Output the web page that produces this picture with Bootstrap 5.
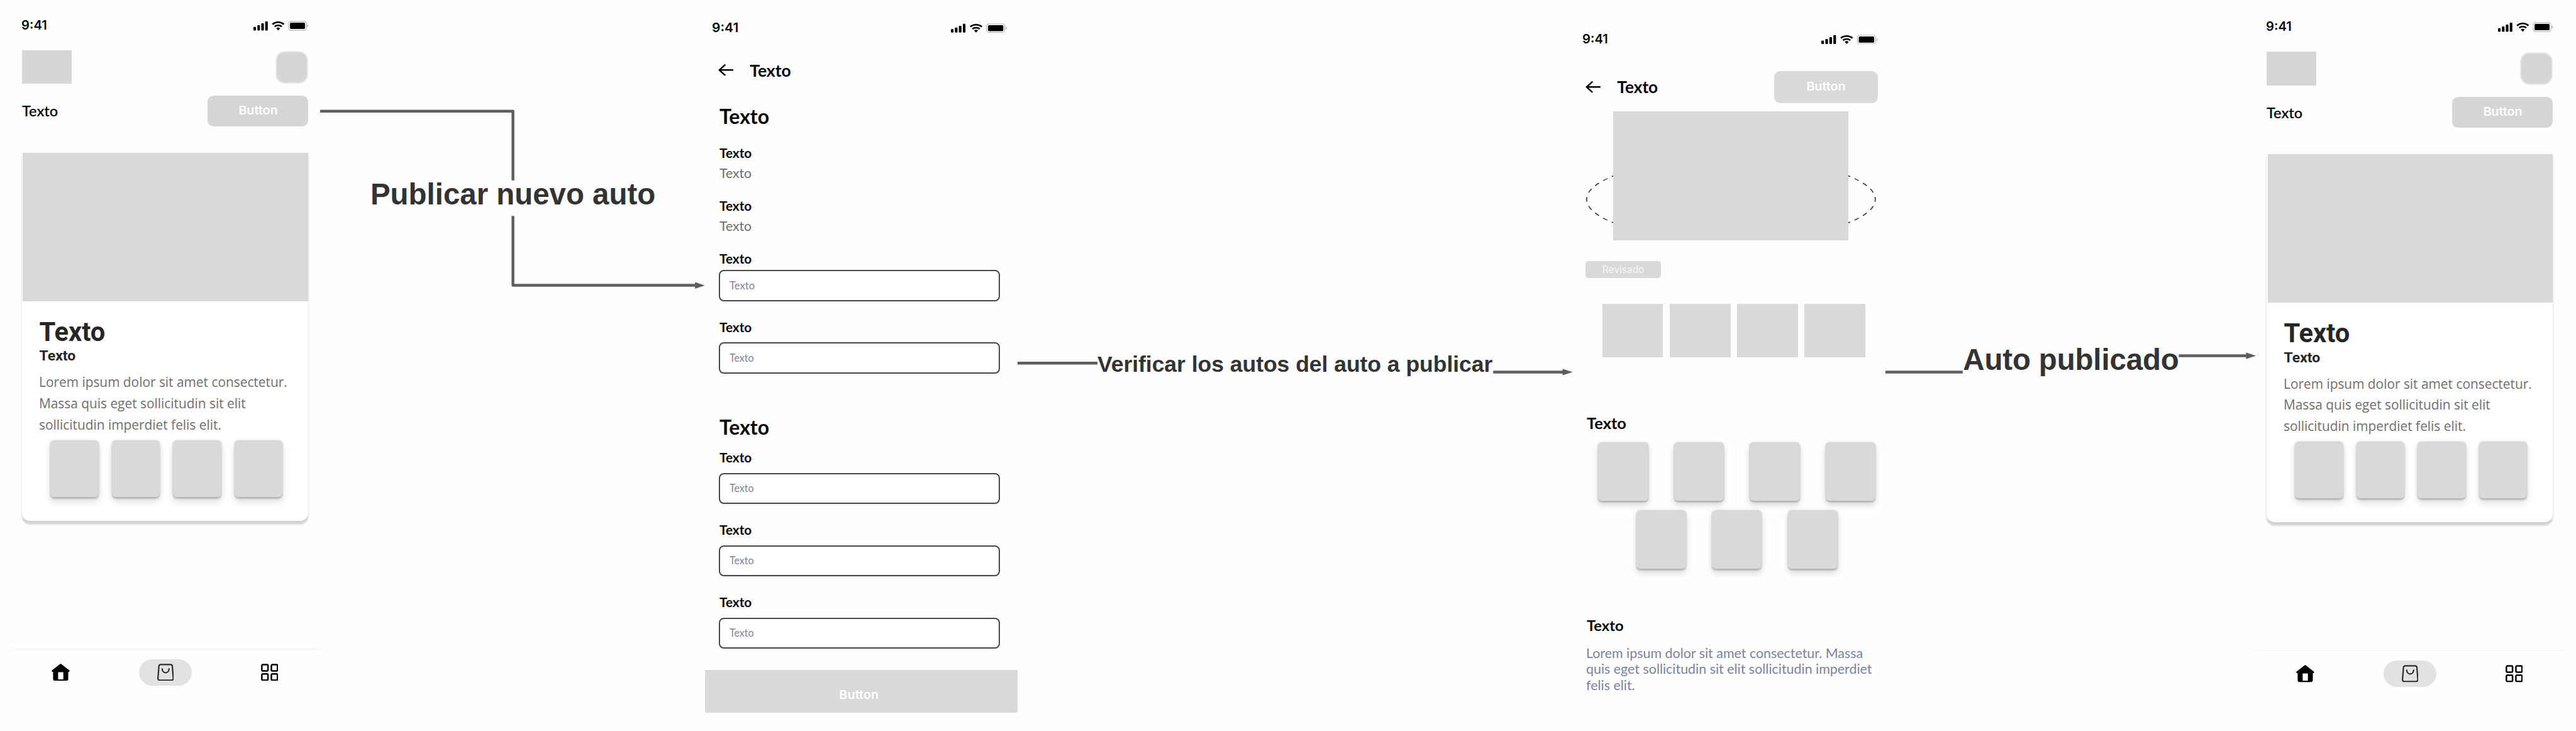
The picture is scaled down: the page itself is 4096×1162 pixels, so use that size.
<!DOCTYPE html>
<html lang="es">
<head>
<meta charset="utf-8">
<meta name="viewport" content="width=device-width, initial-scale=1">
<title>Flujo: publicar auto</title>
<link href="https://cdn.jsdelivr.net/npm/bootstrap@5.3.0/dist/css/bootstrap.min.css" rel="stylesheet">
<style>
/* 1rem = 10 board units */
html{font-size:8.9005px}
body{background:#fefefe;font-family:Lato,sans-serif;color:#050505;overflow:hidden}
.board{width:460.2rem;height:130.5rem;padding-left:2rem}
.phone{height:130.5rem}
.phone-home{width:55.2rem}
.phone-form{width:55.83rem}
.phone-detail{width:55.8rem}
.lower{padding-top:.25rem}
.lower .tabs{height:14.45rem}
svg{display:block}
.wire-a{width:68.8rem}
.wire-b{width:99.17rem}
.wire-c{width:66.2rem}
.wire-label{font-family:"Liberation Sans",Arial,sans-serif;font-weight:700;fill:#333}
.fill{background:#d9d9d9}
.fit{display:inline-block;white-space:nowrap;transform-origin:0 50%}
.fit-mid{transform-origin:50% 50%}
.fw-semi{font-weight:600}

.clock{font:600 2.23rem/2.4rem Inter,sans-serif;margin-left:-.08rem;transform:scaleX(1.02)}
.sys{width:9.85rem;height:1.8rem}
.btn-ghost{font:600 2.1rem/1 Inter,sans-serif;color:#fff;background:#d9d9d9;border:0;border-radius:1.1rem}
.btn-ghost .fit{transform:scaleX(1.055)}

/* home */
.home-pad{padding:0 2.1rem 0 1.95rem}
.home-status{padding-top:3.4rem}
.home-head{margin-top:3.2rem;height:6rem}
.brand-box{width:8.85rem;height:6rem;background:#d6d6d6}
.avatar-box{width:5.9rem;height:5.9rem;border:.3rem solid #e8e8ee;border-radius:1.7rem;background:#d6d6d6}
.home-title{margin-top:2.04rem;height:5.56rem;font-size:2.68rem;line-height:1}
.home-title .t{transform:scaleX(.983)}
.home-title .btn-ghost{width:18rem;height:5.56rem;background:#d6d6d6}
.listing{margin-top:4.67rem;height:65.75rem;border:0;border-radius:0 0 1.4rem 1.4rem;background:#fff;box-shadow:0 .6rem .3rem rgba(0,0,0,.14),0 .2rem .5rem rgba(0,0,0,.07)}
.listing-img{height:26.55rem;margin-left:.15rem}
.listing-body{padding:3.17rem 0 0 3.08rem;font-family:"Open Sans",sans-serif;color:#262626}
.listing-h{font-family:Roboto,sans-serif;font-size:4.68rem;font-weight:700;line-height:4.66rem}
.listing-s{font-family:Roboto,sans-serif;margin-top:.75rem;font-size:2.58rem;font-weight:700;line-height:1}
.listing-p{margin:1.36rem 0 0 -.1rem;font-size:2.43rem;line-height:3.8rem;color:#6f6f6f}
.listing-p .fit{transform:scaleX(.965)}
.tile{background:#d9d9d9;border-radius:.65rem;box-shadow:0 .25rem .2rem rgba(0,0,0,.15),0 .7rem 1.2rem rgba(0,0,0,.15),0 0 .4rem rgba(0,0,0,.14)}
.listing-tiles{margin-top:.9rem;padding-left:1.97rem;gap:2.36rem}
.listing-tiles .tile{width:8.6rem;height:10.1rem}
.tabs{height:14.7rem;border-top:.3rem solid #f7f7f7;padding:1.68rem 7.5rem 0 7.26rem}
.tab-pill{width:9.4rem;height:4.73rem;border-radius:2.4rem;background:#e2e2e2}
.ico-home{width:3.25rem;height:3.1rem}
.ico-bag{width:3rem;height:3.1rem}
.ico-grid{width:3.1rem;height:3.1rem}

/* form */
.form-status{padding:3.78rem 1.93rem 0 1.21rem}
.form-status .clock{transform:scaleX(1.058)}
.form-status .sys{width:10.01rem;height:1.72rem}
.topline{line-height:1;font-weight:700}
.form-top{margin-top:4.88rem;height:3rem;padding-left:2.32rem;font-size:2.98rem}
.back{width:2.73rem;height:2.1rem}
.form-top .back{margin-right:2.9rem}
.form-body{padding:0 3.23rem 0 2.44rem}
.form-h{font-size:3.65rem;font-weight:700;line-height:1;margin-top:4.9rem;padding-left:.1rem}
.form-h .fit{transform:scaleX(.985)}
.form-h.second{margin-top:7.82rem}
.lbl{font-size:2.43rem;line-height:1;font-weight:700;padding-left:.1rem}
.lbl .fit{transform:scaleX(.96)}
.val{font-size:2.43rem;line-height:1;color:#6e6e6e;padding-left:.1rem;margin-top:1.15rem}
.val .fit{transform:scaleX(.98)}
.field{height:5.55rem;margin-top:1.45rem;border:2px solid #484848;border-radius:.9rem;padding:0 0 0 1.64rem;font-size:1.85rem;line-height:1;color:#7d86a0;background:#fff;box-shadow:0 .2rem .3rem rgba(0,0,0,.06)}
.field .fit{transform:scaleX(.97)}
.field.first{margin-top:.72rem}
.field.first .fit{transform:scaleX(1.01)}
.gap-h{margin-top:3.55rem}
.gap-l{margin-top:3.5rem}
.gap-m{margin-top:3.42rem}
.gap-s{margin-top:2.38rem}
.submit{width:100%;height:7.64rem;margin-top:3.79rem;padding:1.45rem .9rem 0 0;font-size:2.12rem;border-radius:0 0 .3rem .3rem}

/* detail */
.det-status{padding:5.8rem 1.3rem 0 1.78rem}
.det-status .sys{width:10.1rem;height:1.75rem}
.det-top{margin-top:4.46rem;height:5.73rem;padding:0 1.3rem 0 2.27rem;font-size:2.95rem}
.det-top .back{margin-right:2.9rem}
.det-top .btn-ghost{width:18.55rem;height:5.73rem}
.stage{margin-top:1.51rem;height:23.03rem;padding-left:7.2rem}
.stage .fill{width:42.04rem;height:100%;position:relative}
.orbit{position:absolute;left:2.37rem;top:8.46rem;width:51.76rem;height:14.58rem}
.seal{margin:3.73rem 0 0 2.22rem;width:13.48rem;height:2.99rem;border-radius:.55rem;color:#f6f6f6;font:400 1.84rem/1 Inter,sans-serif}
.seal .fit{transform:scaleX(.947)}
.thumbs{margin-top:4.65rem;padding-left:5.24rem;gap:1.19rem}
.thumbs .fill{width:10.86rem;height:9.53rem}
.sec{padding-left:2.5rem;font-size:2.7rem;font-weight:700;line-height:1}
.sec .fit{transform:scaleX(1.062)}
.sec-a{margin-top:10.41rem}
.sec-b{margin-top:8.8rem;font-size:2.64rem}
.sec-b .fit{transform:scaleX(1.01)}
.grid-row{gap:4.63rem}
.grid-row .tile{width:8.9rem;height:10.45rem}
.grid-a{margin-top:2.05rem;padding-left:4.55rem}
.grid-b{margin-top:1.72rem;padding-left:11.33rem}
.about{margin:2.19rem 0 0;padding-left:2.35rem;font-size:2.3rem;line-height:2.875rem;color:#7b849c}
.about .fit{transform:scaleX(1.046)}
</style>
</head>
<body>
<svg width="0" height="0" class="position-absolute" aria-hidden="true">
  <defs>
    <symbol id="sys" viewBox="0 0 98.5 18" preserveAspectRatio="none">
      <rect x="0" y="11" width="4.6" height="6.4" rx="1.4"/>
      <rect x="7" y="8" width="4.6" height="9.4" rx="1.4"/>
      <rect x="14" y="4.6" width="4.6" height="12.8" rx="1.4"/>
      <rect x="21" y="1" width="4.6" height="16.4" rx="1.4"/>
      <g fill="none" stroke="#000" stroke-width="3">
        <path d="M34 6.4a15.5 15.5 0 0 1 20.4 0"/>
        <path d="M37.8 10.5a10 10 0 0 1 12.8 0"/>
      </g>
      <path d="M40.7 13.4a5.6 5.6 0 0 1 7 0L44.2 17.3z"/>
      <rect x="63" y="1.2" width="31.4" height="15.8" rx="4" fill="#fff" stroke="#b5b5b5" stroke-width="1.3"/>
      <rect x="65.3" y="3.5" width="26.8" height="11.2" rx="1.8"/>
      <path d="M96 6.6c3 1 3 4.2 0 5.2z" fill="#b5b5b5"/>
    </symbol>
    <symbol id="back" viewBox="0 0 27.3 21">
      <path d="M11.8 1.6 2 10.5l9.8 8.9M2 10.5h23.8" fill="none" stroke="#000" stroke-width="2.8" stroke-linecap="round" stroke-linejoin="round"/>
    </symbol>
    <symbol id="house" viewBox="0 0 32.5 31">
      <path fill-rule="evenodd" d="M15.2.5q1-.7 2 0L32 12.2q.8 1.8-1 2.3h-1.2V27q0 3.8-3.8 3.8H6.5Q2.7 30.8 2.7 27V14.5H1.5Q-.3 14 .5 12.2zM11.7 15.3V28h9.3V15.3z"/>
    </symbol>
    <symbol id="bag" viewBox="0 0 30 31">
      <g fill="none" stroke="#2c2c2c" stroke-width="2.5" stroke-linecap="round">
        <path d="M6.3 1.5h17.4q3 0 3.3 3l1.7 21.2q.2 3.8-3.6 3.8H4.9q-3.800 0-3.600-3.800L3 4.500q.3-3 3.300-3z"/>
        <path d="M8.8 9.3c.4 9 12 9 12.4 0"/>
      </g>
    </symbol>
    <symbol id="squares" viewBox="0 0 31 31">
      <g fill="none" stroke="#000" stroke-width="2.8">
        <rect x="1.5" y="1.7" width="11" height="11.3" rx="2"/><rect x="18.5" y="1.7" width="11" height="11.3" rx="2"/>
        <rect x="1.5" y="18.2" width="11" height="11.3" rx="2"/><rect x="18.5" y="18.2" width="11" height="11.3" rx="2"/>
      </g>
    </symbol>
  </defs>
</svg>

<main class="board d-flex">

  <section class="phone phone-home d-flex flex-column flex-shrink-0">
    <div class="home-pad">
      <div class="home-status d-flex justify-content-between align-items-center">
        <span class="clock fit">9:41</span><svg class="sys"><use href="#sys"/></svg>
      </div>
      <header class="home-head d-flex justify-content-between align-items-center">
        <div class="brand-box"></div><div class="avatar-box"></div>
      </header>
      <div class="home-title d-flex justify-content-between align-items-center">
        <span class="t fit fw-semi">Texto</span>
        <button class="btn btn-ghost p-0" type="button"><span class="fit fit-mid">Button</span></button>
      </div>
      <article class="card listing">
        <div class="listing-img fill"></div>
        <div class="listing-body">
          <div class="listing-h">Texto</div>
          <div class="listing-s">Texto</div>
          <p class="listing-p"><span class="fit">Lorem ipsum dolor sit amet consectetur.<br>Massa quis eget sollicitudin sit elit<br>sollicitudin imperdiet felis elit.</span></p>
          <div class="listing-tiles d-flex">
            <div class="tile"></div><div class="tile"></div><div class="tile"></div><div class="tile"></div>
          </div>
        </div>
      </article>
    </div>
    <nav class="tabs mt-auto d-flex justify-content-between align-items-start">
      <span class="tab-pill w-auto bg-transparent d-flex align-items-center"><svg class="ico-home"><use href="#house"/></svg></span>
      <span class="tab-pill d-flex align-items-center justify-content-center"><svg class="ico-bag"><use href="#bag"/></svg></span>
      <span class="tab-pill w-auto bg-transparent d-flex align-items-center"><svg class="ico-grid"><use href="#squares"/></svg></span>
    </nav>
  </section>

  <svg class="wire-a phone flex-shrink-0" viewBox="572 0 688 1305">
    <path d="M572 198.6H916.5V322.3M916.5 385.7V509.5H1242" fill="none" stroke="#5e5e5e" stroke-width="5" stroke-linejoin="round"/>
    <path d="M1241.8 503.8 1259.3 509.7 1241.8 515.7z" fill="#5e5e5e"/>
    <text class="wire-label" x="916.5" y="365" font-size="53.3" text-anchor="middle">Publicar nuevo auto</text>
  </svg>

  <section class="phone phone-form flex-shrink-0">
    <div class="form-status d-flex justify-content-between align-items-center">
      <span class="clock fit">9:41</span><svg class="sys"><use href="#sys"/></svg>
    </div>
    <header class="form-top topline d-flex align-items-center">
      <svg class="back"><use href="#back"/></svg><span>Texto</span>
    </header>
    <form class="form-body">
      <div class="form-h"><span class="fit">Texto</span></div>
      <div class="lbl gap-h"><span class="fit">Texto</span></div>
      <div class="val"><span class="fit">Texto</span></div>
      <div class="lbl gap-l"><span class="fit">Texto</span></div>
      <div class="val"><span class="fit">Texto</span></div>
      <div class="lbl gap-m"><span class="fit">Texto</span></div>
      <div class="field first d-flex align-items-center"><span class="fit">Texto</span></div>
      <div class="lbl gap-l"><span class="fit">Texto</span></div>
      <div class="field d-flex align-items-center"><span class="fit">Texto</span></div>
      <div class="form-h second"><span class="fit">Texto</span></div>
      <div class="lbl gap-s"><span class="fit">Texto</span></div>
      <div class="field d-flex align-items-center"><span class="fit">Texto</span></div>
      <div class="lbl gap-l"><span class="fit">Texto</span></div>
      <div class="field d-flex align-items-center"><span class="fit">Texto</span></div>
      <div class="lbl gap-l"><span class="fit">Texto</span></div>
      <div class="field d-flex align-items-center"><span class="fit">Texto</span></div>
    </form>
    <button class="btn btn-ghost submit d-flex align-items-center justify-content-center" type="button"><span class="fit fit-mid">Button</span></button>
  </section>

  <svg class="wire-b phone flex-shrink-0" viewBox="1818.3 0 991.7 1305">
    <path d="M1818 648.5H1961M2668 664.5H2793" stroke="#5e5e5e" stroke-width="5"/>
    <path d="M2792 658.7 2810 664.5 2792 670.3z" fill="#5e5e5e"/>
    <text class="wire-label" x="1961" y="664.3" font-size="40" textLength="706">Verificar los autos del auto a publicar</text>
  </svg>

  <section class="phone phone-detail flex-shrink-0">
    <div class="det-status d-flex justify-content-between align-items-center">
      <span class="clock fit">9:41</span><svg class="sys"><use href="#sys"/></svg>
    </div>
    <header class="det-top topline d-flex align-items-center">
      <svg class="back"><use href="#back"/></svg><span class="me-auto">Texto</span>
      <button class="btn btn-ghost p-0" type="button"><span class="fit fit-mid">Button</span></button>
    </header>
    <div class="stage position-relative">
      <svg class="orbit" viewBox="0 0 517.6 145.8" preserveAspectRatio="none"><ellipse cx="258.8" cy="72.9" rx="257.8" ry="71.9" fill="none" stroke="#333" stroke-width="1.8" pathLength="132" stroke-dasharray="1 1" stroke-dashoffset=".5"/></svg>
      <div class="fill"></div>
    </div>
    <div class="seal fill d-flex align-items-center justify-content-center"><span class="fit fit-mid">Revisado</span></div>
    <div class="thumbs d-flex">
      <div class="fill"></div><div class="fill"></div><div class="fill"></div><div class="fill"></div>
    </div>
    <div class="sec sec-a"><span class="fit">Texto</span></div>
    <div class="grid-row grid-a d-flex"><div class="tile"></div><div class="tile"></div><div class="tile"></div><div class="tile"></div></div>
    <div class="grid-row grid-b d-flex"><div class="tile"></div><div class="tile"></div><div class="tile"></div></div>
    <div class="sec sec-b"><span class="fit">Texto</span></div>
    <p class="about"><span class="fit">Lorem ipsum dolor sit amet consectetur. Massa<br>quis eget sollicitudin sit elit sollicitudin imperdiet<br>felis elit.</span></p>
  </section>

  <svg class="wire-c phone flex-shrink-0" viewBox="3368 0 662 1305">
    <path d="M3368 664.5H3506M3892 635.3H4013" stroke="#5e5e5e" stroke-width="5"/>
    <path d="M4012.2 629.5 4030 635.3 4012.2 641.2z" fill="#5e5e5e"/>
    <text class="wire-label" x="3506.5" y="661" font-size="53.3" textLength="386">Auto publicado</text>
  </svg>

  <section class="phone phone-home lower d-flex flex-column flex-shrink-0">
    <div class="home-pad">
      <div class="home-status d-flex justify-content-between align-items-center">
        <span class="clock fit">9:41</span><svg class="sys"><use href="#sys"/></svg>
      </div>
      <header class="home-head d-flex justify-content-between align-items-center">
        <div class="brand-box"></div><div class="avatar-box"></div>
      </header>
      <div class="home-title d-flex justify-content-between align-items-center">
        <span class="t fit fw-semi">Texto</span>
        <button class="btn btn-ghost p-0" type="button"><span class="fit fit-mid">Button</span></button>
      </div>
      <article class="card listing">
        <div class="listing-img fill"></div>
        <div class="listing-body">
          <div class="listing-h">Texto</div>
          <div class="listing-s">Texto</div>
          <p class="listing-p"><span class="fit">Lorem ipsum dolor sit amet consectetur.<br>Massa quis eget sollicitudin sit elit<br>sollicitudin imperdiet felis elit.</span></p>
          <div class="listing-tiles d-flex">
            <div class="tile"></div><div class="tile"></div><div class="tile"></div><div class="tile"></div>
          </div>
        </div>
      </article>
    </div>
    <nav class="tabs mt-auto d-flex justify-content-between align-items-start">
      <span class="tab-pill w-auto bg-transparent d-flex align-items-center"><svg class="ico-home"><use href="#house"/></svg></span>
      <span class="tab-pill d-flex align-items-center justify-content-center"><svg class="ico-bag"><use href="#bag"/></svg></span>
      <span class="tab-pill w-auto bg-transparent d-flex align-items-center"><svg class="ico-grid"><use href="#squares"/></svg></span>
    </nav>
  </section>

</main>
<script src="https://cdn.jsdelivr.net/npm/bootstrap@5.3.0/dist/js/bootstrap.bundle.min.js"></script>
</body>
</html>
